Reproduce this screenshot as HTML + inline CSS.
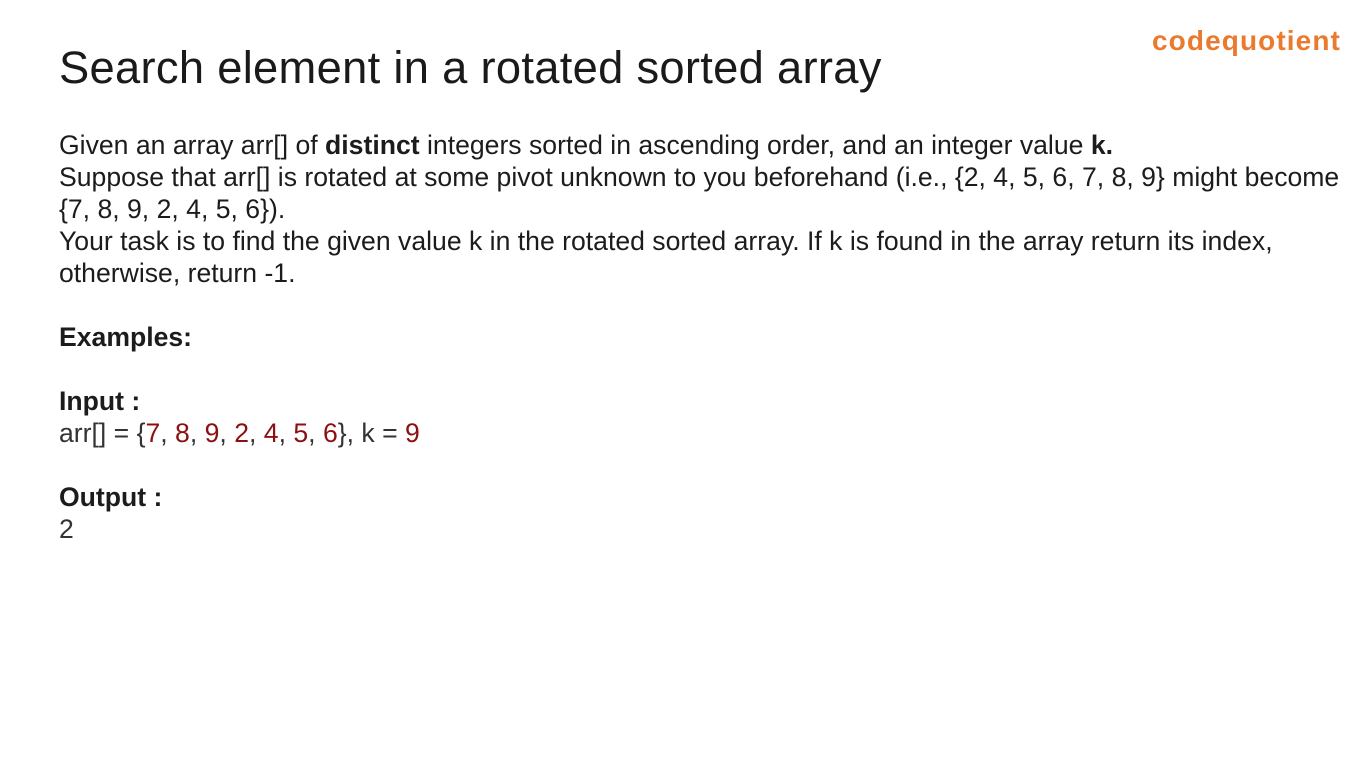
<!DOCTYPE html>
<html><head><meta charset="utf-8"><style>
html,body{margin:0;padding:0;width:1366px;height:768px;overflow:hidden;background:#fff;font-family:"Liberation Sans",Arial,sans-serif;}
.title{position:absolute;left:59px;top:45px;font-size:45.3px;line-height:46px;color:#1a1a1a;letter-spacing:0.3px;}
.logo{position:absolute;left:1152px;top:25px;font-size:28px;line-height:32px;font-weight:bold;color:#ea7a2e;letter-spacing:1.1px;}
.body{position:absolute;left:59px;top:129px;font-size:26.6px;line-height:32px;color:#1c1c1c;width:1300px;}
.r{color:#8b1010}
.g{color:#333}
p{margin:0}
</style></head><body>
<div class="title">Search element in a rotated sorted array</div>
<div class="logo">codequotient</div>
<div class="body">
<p>Given an array arr[] of <b>distinct</b> integers sorted in ascending order, and an integer value <b>k.</b></p>
<p>Suppose that arr[] is rotated at some pivot unknown to you beforehand (i.e., {2, 4, 5, 6, 7, 8, 9} might become<br>{7, 8, 9, 2, 4, 5, 6}).</p>
<p>Your task is to find the given value k in the rotated sorted array. If k is found in the array return its index,<br>otherwise, return -1.</p>
<p>&nbsp;</p>
<p><b>Examples:</b></p>
<p>&nbsp;</p>
<p><b>Input :</b></p>
<p class="g">arr[] = {<span class="r">7</span>, <span class="r">8</span>, <span class="r">9</span>, <span class="r">2</span>, <span class="r">4</span>, <span class="r">5</span>, <span class="r">6</span>}, k = <span class="r">9</span></p>
<p>&nbsp;</p>
<p><b>Output :</b></p>
<p class="g">2</p>
</div>
</body></html>
